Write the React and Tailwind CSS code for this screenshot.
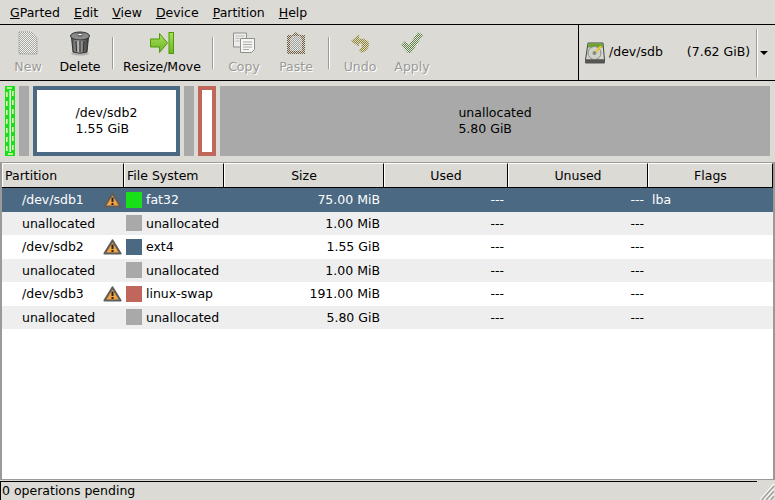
import React from "react";

const rows = [
  { name: "/dev/sdb1", warn: true, color: "bg-[#18e018]", fs: "fat32", size: "75.00 MiB", flags: "lba", selected: true },
  { name: "unallocated", color: "bg-[#a9a9a9]", fs: "unallocated", size: "1.00 MiB" },
  { name: "/dev/sdb2", warn: true, color: "bg-[#4b6983]", fs: "ext4", size: "1.55 GiB" },
  { name: "unallocated", color: "bg-[#a9a9a9]", fs: "unallocated", size: "1.00 MiB" },
  { name: "/dev/sdb3", warn: true, color: "bg-[#c1665a]", fs: "linux-swap", size: "191.00 MiB" },
  { name: "unallocated", color: "bg-[#a9a9a9]", fs: "unallocated", size: "5.80 GiB" },
];

const columns = ["Partition", "File System", "Size", "Used", "Unused", "Flags"];
const gridCols = "grid grid-cols-[122px_100px_160px_124px_140px_125px]";

const Stipple = ({ id, color, back = "#dcdad5" }) => (
  <pattern id={id} width="2" height="2" patternUnits="userSpaceOnUse">
    <rect width="2" height="2" fill={back} />
    <rect width="1" height="1" fill={color} />
    <rect x="1" y="1" width="1" height="1" fill={color} />
  </pattern>
);

const NewIcon = () => (
  <svg width="20" height="24" viewBox="0 0 20 24">
    <defs><Stipple id="st-new" color="#a4a4a0" back="#f4f4f2" /></defs>
    <path d="M1 1h12l6 6v16H1z" fill="url(#st-new)" stroke="#8a8a86" strokeDasharray="1 1" />
  </svg>
);

const DeleteIcon = () => (
  <svg width="22" height="26" viewBox="0 0 22 26">
    <defs>
      <linearGradient id="bin" x1="0" x2="1" y1="0" y2="0">
        <stop offset="0" stopColor="#4a4a4a" />
        <stop offset="0.4" stopColor="#b8b8b8" />
        <stop offset="1" stopColor="#333" />
      </linearGradient>
    </defs>
    <ellipse cx="11" cy="23.500" rx="9" ry="2" fill="#b0b0ac" />
    <path d="M2.500 7h17l-1.500 15q-7 2.500-14 0z" fill="url(#bin)" stroke="#333" />
    <path d="M7 11l.5 10.500M11 11v11M15 11l-.5 10.500" stroke="#333" strokeWidth="1.200" />
    <ellipse cx="11" cy="6" rx="9.500" ry="4" fill="#8a8a8a" stroke="#2e2e2e" />
    <ellipse cx="11" cy="4.500" rx="3" ry="1.500" fill="#ddd" stroke="#444" />
  </svg>
);

const ResizeIcon = () => (
  <svg width="24" height="22" viewBox="0 0 24 22">
    <defs>
      <linearGradient id="rz" x1="0" x2="0" y1="0" y2="1">
        <stop offset="0" stopColor="#a8e05a" />
        <stop offset="1" stopColor="#6cb426" />
      </linearGradient>
    </defs>
    <path d="M.5 7h9V1.500L17.500 11l-8 9.500V15h-9z" fill="url(#rz)" stroke="#4e9a06" />
    <rect x="19" y=".5" width="4.500" height="21" fill="url(#rz)" stroke="#4e9a06" />
  </svg>
);

const CopyIcon = () => (
  <svg width="24" height="22" viewBox="0 0 24 22">
    <path d="M1.500 1h13v14h-13z" fill="#ececea" stroke="#8f8f8b" />
    <path d="M8.500 6.500h14v11l-3 3h-11z" fill="#f6f6f4" stroke="#8f8f8b" />
    <path d="M11 10h9M11 12.500h9M11 15h9M11 17.500h6" stroke="#a8a8a4" />
    <path d="M3.500 4h9M3.500 6.500h4M3.500 9h4" stroke="#b8b8b4" />
  </svg>
);

const PasteIcon = () => (
  <svg width="20" height="24" viewBox="0 0 20 24">
    <defs>
      <Stipple id="st-paste" color="#6e5a38" />
      <Stipple id="st-paper" color="#a0a09c" back="#e6e6e4" />
    </defs>
    <path d="M1 4h5l4-3 4 3h5v19H1z" fill="url(#st-paste)" />
    <path d="M6 5h8l1 2 1 1v12H4V8l1-1z" fill="url(#st-paper)" />
  </svg>
);

const UndoIcon = () => (
  <svg width="20" height="20" viewBox="0 0 20 20">
    <defs><Stipple id="st-undo" color="#8f8428" /></defs>
    <path d="M9 1L1 8l8 6v-4q3 0 3 2.500T9 17l3 3q7-3 7-9 0-5.500-10-5.500z" fill="url(#st-undo)" />
  </svg>
);

const ApplyIcon = () => (
  <svg width="24" height="24" viewBox="0 0 24 24">
    <defs><Stipple id="st-apply" color="#5f7f48" back="#e4e8dc" /></defs>
    <path d="M1 14l4-4 4 4L18 1l5 3-12 18H8z" fill="url(#st-apply)" />
  </svg>
);

const DiskIcon = () => (
  <svg width="20" height="22" viewBox="0 0 20 22" className="shrink-0">
    <path d="M3 1h15l1.500 17H.5z" fill="#d8d8d2" stroke="#444" />
    <path d="M3.500 1.500h14l.4 4H3z" fill="#6aa52a" />
    <circle cx="9.500" cy="11" r="6.500" fill="#cfd2c8" stroke="#8a8a84" />
    <circle cx="9.500" cy="11" r="2" fill="#8a8a84" />
    <path d="M11 10l5-6" stroke="#e8c434" strokeWidth="2" />
    <rect x="0" y="17.500" width="20" height="4" rx="1" fill="#555" />
  </svg>
);

const WarnIcon = () => (
  <svg width="19" height="18" viewBox="0 0 19 18" className="shrink-0">
    <path d="M9.500 2.500L17.500 15.500H1.500z" fill="#f5a33c" stroke="#5e5e5e" strokeWidth="2.200" strokeLinejoin="round" />
    <path d="M9.500 6.500v4.500" stroke="#222" strokeWidth="2" />
    <rect x="8.500" y="12" width="2" height="2" fill="#222" />
  </svg>
);

const SelectionBar = () => (
  <svg width="10" height="70" viewBox="0 0 10 70" className="shrink-0">
    <rect width="10" height="70" fill="#18e018" />
    <rect x="4.500" y="4" width="1.500" height="62" fill="#fff" />
    <rect x="1.850" y="2" width="6" height="66" fill="none" stroke="#f4f4c0" strokeWidth="1.500" strokeDasharray="5 4" />
  </svg>
);

const Sep = ({ className }) => <div className={`h-8 w-0.5 self-center border-l border-[#9a9a96] bg-white ${className}`} />;

const ToolButton = ({ icon, label, disabled, className }) => (
  <div className={`flex flex-col items-center pt-1 ${className}`}>
    <div className="flex h-7 items-center">{icon}</div>
    <span className={disabled ? "mt-px text-[#9a9a96] [text-shadow:1px_1px_0_#fff]" : "mt-px text-black"}>{label}</span>
  </div>
);

const MapBlock = ({ border, className, children }) => (
  <div className={`flex items-center justify-center border-4 bg-white ${border} ${className}`}>{children}</div>
);

export default function App() {
  return (
    <div
      className="flex h-[500px] w-[775px] flex-col overflow-hidden bg-[#dcdad5] pt-px text-[12.5px] text-black"
      style={{ fontFamily: '"DejaVu Sans", sans-serif' }}
    >
      <div className="flex h-6 items-center gap-3.5 border-b border-black px-2.5 pt-0.5">
        <span><u>G</u>Parted</span>
        <span><u>E</u>dit</span>
        <span><u>V</u>iew</span>
        <span><u>D</u>evice</span>
        <span><u>P</u>artition</span>
        <span><u>H</u>elp</span>
      </div>

      <div className="flex h-14 border-b border-black">
        <div className="flex w-[579px] border-r border-black pl-0.5">
          <ToolButton className="w-13" icon={<NewIcon />} label="New" disabled />
          <ToolButton className="w-13" icon={<DeleteIcon />} label="Delete" />
          <Sep className="mx-1.5" />
          <ToolButton className="w-21" icon={<ResizeIcon />} label="Resize/Move" />
          <Sep className="ml-2 mr-1" />
          <ToolButton className="w-13" icon={<CopyIcon />} label="Copy" disabled />
          <ToolButton className="w-13" icon={<PasteIcon />} label="Paste" disabled />
          <Sep className="ml-1.5 mr-1" />
          <ToolButton className="w-13" icon={<UndoIcon />} label="Undo" disabled />
          <ToolButton className="w-13" icon={<ApplyIcon />} label="Apply" disabled />
        </div>
        <div className="flex flex-1 items-center pl-1.5">
          <DiskIcon />
          <span className="ml-1">/dev/sdb</span>
          <span className="ml-6">(7.62 GiB)</span>
          <div className="ml-1.5 h-12 w-0.5 border-l border-[#9a9a96] bg-white" />
          <div className="ml-0.5 h-0 w-0 border-x-4 border-t-4 border-x-transparent border-t-black" />
        </div>
      </div>

      <div className="flex gap-1 pb-1.5 pl-[5px] pr-[5px] pt-[5px] leading-4">
        <SelectionBar />
        <div className="h-[70px] w-2.5 bg-[#a9a9a9]" />
        <MapBlock border="border-[#4b6983]" className="w-[147px]">
          <div>
            <div>/dev/sdb2</div>
            <div>1.55 GiB</div>
          </div>
        </MapBlock>
        <div className="w-2.5 bg-[#a9a9a9]" />
        <MapBlock border="border-[#c1665a]" className="w-4.5" />
        <div className="flex flex-1 items-center justify-center bg-[#a9a9a9]">
          <div>
            <div>unallocated</div>
            <div>5.80 GiB</div>
          </div>
        </div>
      </div>

      <div className="flex flex-1 flex-col border-x-2 border-y border-[#9a9a96] bg-white">
        <div className={`${gridCols} h-[25px] border-b border-black`}>
          {columns.map((col, i) => (
            <div
              key={col}
              className={`flex items-center border-l border-r border-t border-l-white border-r-black border-t-white bg-[#dcdad5] pt-px ${i < 2 ? "pl-0.5" : "justify-center"}`}
            >
              {col}
            </div>
          ))}
        </div>
        {rows.map((row, index) => (
          <div
            key={index}
            className={`${gridCols} h-[23.5px] items-center ${
              row.selected ? "bg-[#4b6983] text-white" : index % 2 === 1 ? "bg-[#eeeeee]" : "bg-white"
            }`}
          >
            <div className="flex items-center justify-between pl-5 pr-0.5">
              <span className="pt-0.5">{row.name}</span>
              {row.warn && <WarnIcon />}
            </div>
            <div className="flex items-center gap-1 pl-0.5">
              <div className={`size-4 ${row.color}`} />
              <span className="pt-0.5">{row.fs}</span>
            </div>
            <div className="pr-1 pt-0.5 text-right">{row.size}</div>
            <div className="pr-1 pt-0.5 text-right">---</div>
            <div className="pr-1 pt-0.5 text-right">---</div>
            <div className="pl-1 pt-0.5">{row.flags}</div>
          </div>
        ))}
      </div>

      <div className="flex h-5 pt-px">
        <div className="flex flex-1 items-center border-l border-t border-black pl-px">0 operations pending</div>
        <svg width="18" height="19" viewBox="0 0 18 19" className="shrink-0">
          <path d="M17 3L3 19M17 8L7.500 19M17 13L12 19" stroke="#f6f6f4" strokeWidth="1.500" />
          <path d="M17 5L4.500 19M17 10L9 19M17 15L13.500 19" stroke="#9a9a96" strokeWidth="1.200" />
        </svg>
      </div>
    </div>
  );
}
